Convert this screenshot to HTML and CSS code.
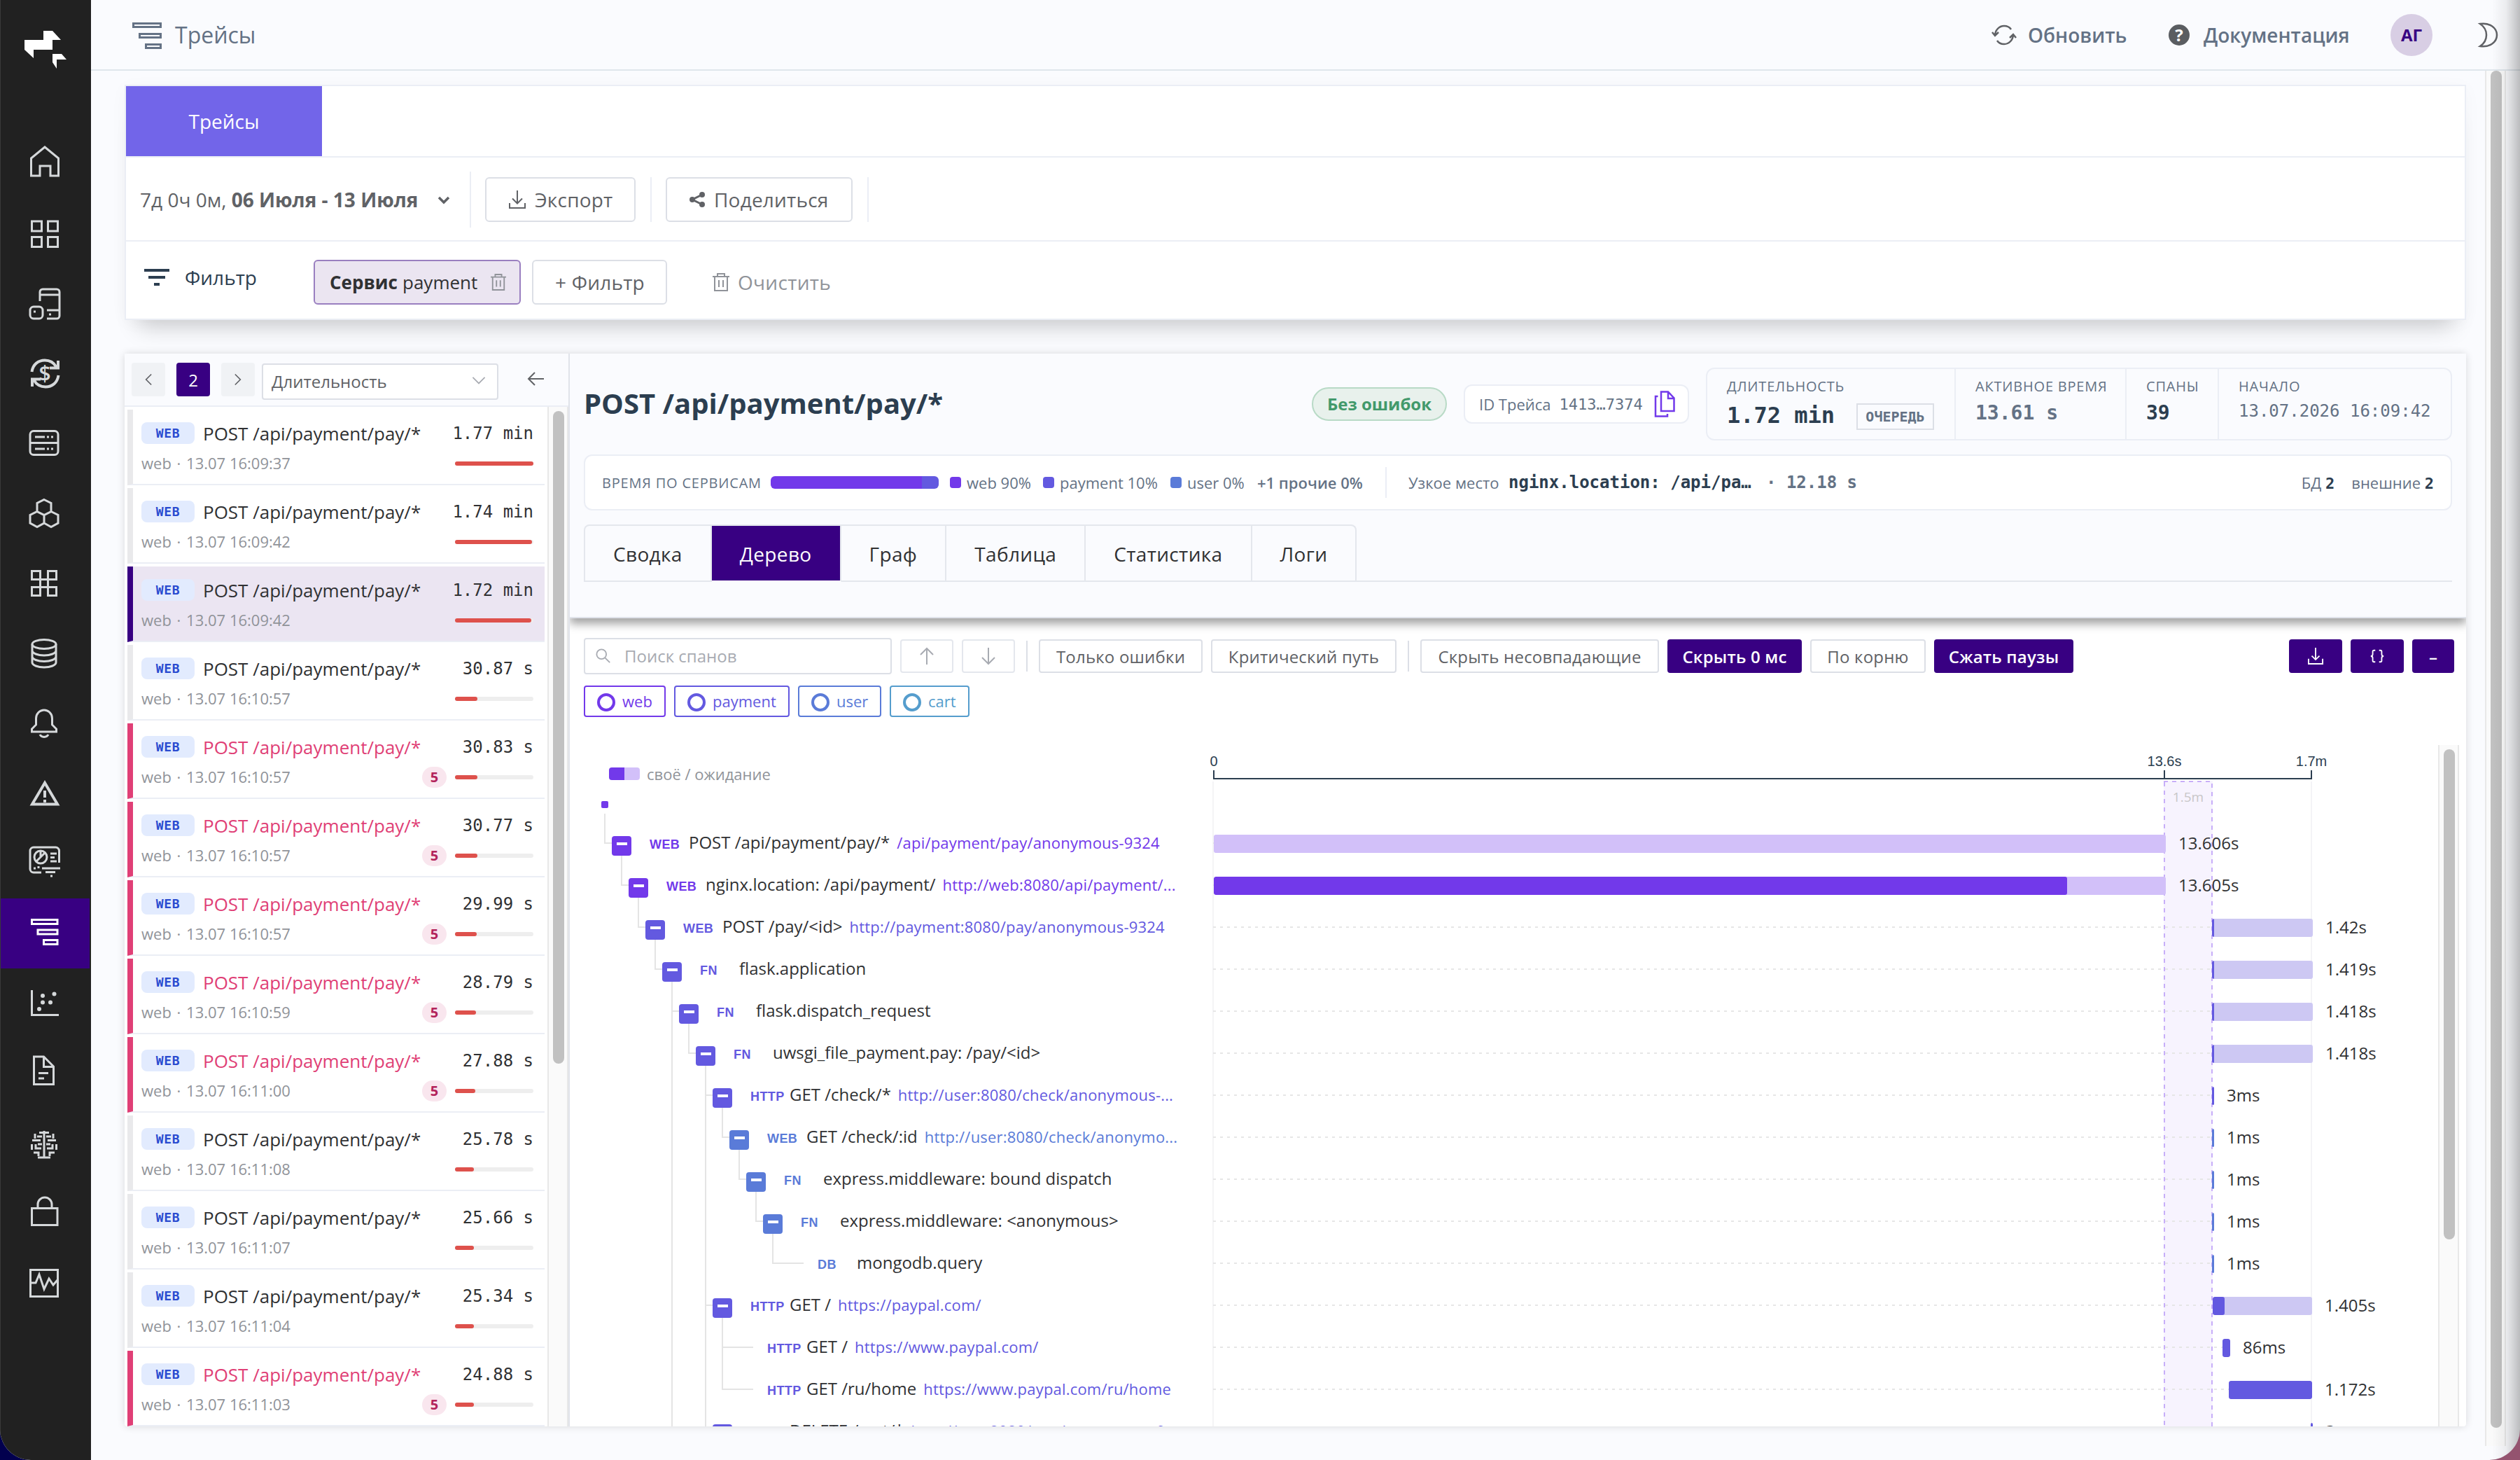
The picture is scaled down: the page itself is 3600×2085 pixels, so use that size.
FILE: index.html
```html
<!DOCTYPE html>
<html lang="ru">
<head>
    <meta charset="UTF-8">
    <meta name="viewport" content="width=device-width, initial-scale=1.0">
    <title>Трейсы</title>
    <link rel="stylesheet" href="styles.css">
</head>
<body>

<div class="app">
    <nav class="sidebar">
        <svg class="logo" viewBox="0 0 60 54"><path d="M27 0h13l12 13v0H40v14H23l0 0H13v12L0 27V13h27z"/><path d="M40 33h13l7 8H49l-3 0v13l-6-9z"/></svg>
        <a class="nav-item"><svg viewBox="0 0 48 48"><path d="M24 1 4.500 17v25H17V28h15v14h11.500V17z"/></svg></a>
        <a class="nav-item"><svg viewBox="0 0 48 48"><path d="M5.500 7h14v14h-14zM28.500 7h14v14h-14zM5.500 29.500h14v14h-14zM28.500 29.500h14v14h-14z"/></svg></a>
        <a class="nav-item"><svg viewBox="0 0 48 48"><path d="M17 21V8a4 4 0 0 1 4-4h20a4 4 0 0 1 4 4v34a4 4 0 0 1-4 4H27M17 12h28M27 34h18M30 40h3M8 36h3"/><rect x="3" y="29" width="18" height="17" rx="5"/></svg></a>
        <a class="nav-item"><svg viewBox="0 0 48 48"><path class="thick" d="M5.500 22C7 11 15 5.500 24 5.500c7 0 13 3.500 16.500 9.500M43 6v10.500H31M43.500 27C42 38 34 43.500 25 43.500c-7 0-13-3.500-16.500-9.500M6 43V32.500h12"/><text x="24" y="35" text-anchor="middle">$</text></svg></a>
        <a class="nav-item"><svg viewBox="0 0 48 48"><rect x="3" y="6.500" width="40" height="34" rx="5"/><path d="M3 23.500h40M10 15h14M27 15h3M33 15h3M10 32h14M27 32h3M33 32h3"/></svg></a>
        <a class="nav-item"><svg viewBox="0 0 48 48"><path d="M23 4.500 33 9.500v12L23 26.500 13 21.500v-12zM13 21.500l10 5v11.500l-10 5.500-10-5.500V26.500zM33 21.500l10 5v11.500l-10 5.500-10-5.500"/></svg></a>
        <a class="nav-item"><svg viewBox="0 0 48 48"><path d="M5.500 6.500h12v35h-12v-12h35v12h-12v-35h12v12h-35z"/></svg></a>
        <a class="nav-item"><svg viewBox="0 0 48 48"><ellipse cx="23" cy="11" rx="17" ry="6.500"/><path d="M6 11v26c0 4 8 7 17 7s17-3 17-7V11M6 20c0 4 8 7 17 7s17-3 17-7M6 28.500c0 4 8 7 17 7s17-3 17-7"/></svg></a>
        <a class="nav-item"><svg viewBox="0 0 48 48"><path d="M5.500 36v-4l6-6V17a11.500 12 0 0 1 23 0v9l6 6v4zM17 40c2 4.500 10 4.500 12 0"/></svg></a>
        <a class="nav-item"><svg viewBox="0 0 48 48"><path class="thick" d="M24 9 6 39.500h36zM24 20v10M24 33v4"/></svg></a>
        <a class="nav-item"><svg viewBox="0 0 48 48"><path d="M44.500 23V6a5 5 0 0 0-5-5H8a5 5 0 0 0-5 5v26a5 5 0 0 0 5 5h11M20 31h26M25 36.500h14M32 42h3M32 10h9M32 15.500h6M32 21h9M15 28v3M8 31h3"/><circle cx="18" cy="15" r="9"/><path d="M18 6v9l-6 6M18 15l6-6"/></svg></a>
        <a class="nav-item active"><svg viewBox="0 0 48 48"><path d="M5.500 4.500h36.500v6H5.500zM14 19h28v6H14zM22.500 33.500H42v6H22.500z"/></svg></a>
        <a class="nav-item"><svg viewBox="0 0 48 48"><path d="M5.500 5v35.500H44"/><g class="dots"><circle cx="16" cy="32" r="3"/><circle cx="21" cy="22.500" r="3"/><circle cx="21" cy="13" r="3"/><circle cx="32" cy="22.500" r="3"/><circle cx="37.500" cy="10.500" r="3"/></g></svg></a>
        <a class="nav-item"><svg viewBox="0 0 48 48"><path d="M8.500 0h14l14 14v25.500h-28zM22.500 0v14.500h14M15 23.500h14M15 31h8"/></svg></a>
        <a class="nav-item"><svg viewBox="0 0 48 48"><path d="M23 6v38M16 8.500h14M10 10v7M36 10v7M13 14h7M26 14h7M6 19.500h12M28 19.500h12M5.500 25v8M40.500 25v8M11 25v6h8M35 25v6h-8M14 25h6M26 25h6M8 37h7v5M38 37h-7v5M14 44h18"/></svg></a>
        <a class="nav-item"><svg viewBox="0 0 48 48"><path d="M5.500 16.500H42v24H5.500zM14 16V11a10 10 0 0 1 20 0v5"/></svg></a>
        <a class="nav-item"><svg viewBox="0 0 48 48"><path d="M3.500 4.500h39v38h-39zM4 23h7l5-12 7 21 7-15 6 9 6-7"/></svg></a>
    </nav>

    <div class="page">
        <header class="topbar">
            <svg class="topbar-icon" viewBox="0 0 42 40"><path d="M1.500 2.500h39v5h-39zM10.500 17.500h30v5h-30zM19.500 32.500h21v5h-21z"/></svg>
            <h1>Трейсы</h1>
            <div class="topbar-links">
                <svg class="i-refresh" viewBox="0 0 36 30"><path d="M5 16C5 8 11 2 18 2c4 0 8 2 10 5M1 11l4 5 5-5M31 14c0 8-6 14-13 14-4 0-8-2-10-5M26 19l5-5 4 5"/></svg>
                <span class="t-refresh">Обновить</span>
                <span class="help">?</span>
                <span class="t-docs">Документация</span>
                <span class="avatar">АГ</span>
                <svg class="i-moon" viewBox="0 0 28 36"><path d="M2 2c14-2 24 6 24 16S16 36 2 34c12-8 12-24 0-32z"/></svg>
            </div>
        </header>

        <div class="content">
            <main class="main">
                <section class="filters">
                    <div class="page-tabs"><div class="page-tab">Трейсы</div></div>
                    <div class="range-row">
                        <div class="range"><span>7д 0ч 0м, <b>06 Июля - 13 Июля</b></span>
                            <svg viewBox="0 0 18 12"><path d="M2 2l7 7 7-7"/></svg>
                        </div>
                        <div class="btn btn-export">
                            <svg viewBox="0 0 24 26"><path d="M12 0v18M5 11.500l7 7 7-7M1 18v7h22v-7"/></svg>Экспорт
                        </div>
                        <i class="vline"></i>
                        <div class="btn btn-share">
                            <svg viewBox="0 0 22 22"><path d="M18 4 4 11l14 7"/><circle cx="18" cy="4" r="3"/><circle cx="4" cy="11" r="3"/><circle cx="18" cy="18" r="3"/></svg>Поделиться
                        </div>
                        <i class="vline"></i>
                    </div>
                    <div class="filter-row">
                        <div class="filter-title"><svg viewBox="0 0 36 24"><path d="M0 2h36M6 12h24M14 22h8"/></svg>Фильтр</div>
                        <div class="tag"><b>Сервис</b><span>payment</span>
                            <svg class="trash" viewBox="0 0 24 26"><path d="M0 5h24M7 5V1h10v4M3 5v20h18V5M9 10v10M15 10v10"/></svg>
                        </div>
                        <div class="btn btn-add">+ Фильтр</div>
                        <div class="clear"><svg class="trash" viewBox="0 0 24 26"><path d="M0 5h24M7 5V1h10v4M3 5v20h18V5M9 10v10M15 10v10"/></svg>Очистить</div>
                    </div>
                </section>

                <section class="explorer">
                    <aside class="trace-pane">
                        <div class="pager">
                            <span class="page-btn"><svg viewBox="0 0 12 20"><path d="M11 1 2 10l9 9"/></svg></span>
                            <span class="page-btn current">2</span>
                            <span class="page-btn"><svg viewBox="0 0 12 20"><path d="M1 1l9 9-9 9"/></svg></span>
                            <div class="select">Длительность<svg viewBox="0 0 22 14"><path d="M1 1l10 10L21 1"/></svg></div>
                            <svg class="collapse" viewBox="0 0 24 20"><path d="M24 10H2M11 1 2 10l9 9"/></svg>
                        </div>
                        <div class="trace-body">
                            <div class="trace-list" id="traces"></div>
                            <div class="scrollbar"><div class="thumb"></div></div>
                        </div>
                    </aside>

                    <div class="trace-view">
                        <div class="trace-head">
                            <div class="summary">
                                <h2>POST /api/payment/pay/*</h2>
                                <span class="ok-badge">Без ошибок</span>
                                <div class="trace-id"><span>ID Трейса</span><code>1413…7374</code>
                                    <svg viewBox="0 0 30 38"><path d="M10 1.500h10l8.500 9V29H10zM20 2v9h8M5.500 8H2v28.500h17V33"/></svg>
                                </div>
                                <div class="metrics">
                                    <div class="metric m-duration"><label>Длительность</label><div><strong>1.72 min</strong><em>ОЧЕРЕДЬ</em></div></div>
                                    <div class="metric m-active"><label>Активное время</label><strong>13.61 s</strong></div>
                                    <div class="metric m-spans"><label>Спаны</label><strong>39</strong></div>
                                    <div class="metric m-start"><label>Начало</label><code>13.07.2026 16:09:42</code></div>
                                </div>
                            </div>
                            <div class="services">
                                <span class="caption">Время по сервисам</span>
                                <div class="share-bar"><i class="s-web"></i><i class="s-payment"></i></div>
                                <span class="key k-web">web 90%</span>
                                <span class="key k-payment">payment 10%</span>
                                <span class="key k-user">user 0%</span>
                                <b class="others">+1 прочие 0%</b>
                                <span class="bottleneck">Узкое место</span>
                                <code class="where">nginx.location: /api/pa…</code>
                                <code class="cost">· 12.18 s</code>
                                <span class="calls">БД <b>2</b></span>
                                <span class="calls external">внешние <b>2</b></span>
                            </div>
                            <div class="tabs">
                                <span class="tab">Сводка</span>
                                <span class="tab active">Дерево</span>
                                <span class="tab">Граф</span>
                                <span class="tab">Таблица</span>
                                <span class="tab">Статистика</span>
                                <span class="tab">Логи</span>
                            </div>
                        </div>

                        <div class="toolbar">
                            <div class="search"><svg viewBox="0 0 24 24"><circle cx="9" cy="9" r="7.500"/><path d="M14.500 14.500 22 22"/></svg>Поиск спанов</div>
                            <span class="tool arrow"><svg viewBox="0 0 20 24"><path d="M10 24V1M1 10l9-9 9 9"/></svg></span>
                            <span class="tool arrow"><svg viewBox="0 0 20 24"><path d="M10 0v23M1 14l9 9 9-9"/></svg></span>
                            <i class="vline"></i>
                            <span class="tool" style="width: 234px">Только ошибки</span>
                            <span class="tool" style="width: 265px">Критический путь</span>
                            <i class="vline"></i>
                            <span class="tool" style="width: 341px">Скрыть несовпадающие</span>
                            <span class="tool on" style="width: 192px">Скрыть 0 мс</span>
                            <span class="tool" style="width: 165px">По корню</span>
                            <span class="tool on" style="width: 199px">Сжать паузы</span>
                            <span class="tool on first-right" style="width: 76px"><svg viewBox="0 0 24 26"><path d="M12 0v18M6 12.500l6 6 6-6M1 17v8h22v-8"/></svg></span>
                            <span class="tool on" style="width: 76px"><svg viewBox="0 0 24 20"><path d="M9 1H7Q5 1 5 3v4q0 3-3 3 3 0 3 3v4q0 2 2 2h2M15 1h2q2 0 2 2v4q0 3 3 3-3 0-3 3v4q0 2-2 2h-2"/></svg></span>
                            <span class="tool on" style="width: 60px">–</span>
                        </div>
                        <div class="chips">
                            <span class="chip c-web" style="width: 117px">web</span>
                            <span class="chip c-payment" style="width: 165px">payment</span>
                            <span class="chip c-user" style="width: 119px">user</span>
                            <span class="chip c-cart" style="width: 114px">cart</span>
                        </div>

                        <div class="waterfall">
                            <div class="waterfall-body">
                                <div class="waterfall-head">
                                    <div class="legend"><i></i>своё / ожидание</div>
                                    <div class="axis">
                                        <span class="tick" style="left: 0">0</span>
                                        <span class="tick" style="left: 1358px">13.6s</span>
                                        <span class="tick" style="left: 1568px">1.7m</span>
                                    </div>
                                </div>
                                <div class="span-rows" id="spans"></div>
                                <div class="pause">1.5m</div>
                            </div>
                            <div class="scrollbar"><div class="thumb"></div></div>
                        </div>
                    </div>
                </section>
            </main>
            <div class="scrollbar page-scroll"><div class="thumb"></div></div>
        </div>
    </div>
    <div class="edge"></div>
</div>

<script src="script.js"></script>
</body>
</html>
```

FILE: styles.css
```css
*, *::before, *::after {
    box-sizing: border-box;
}
body {
    margin: 0;
    width: 3600px;
    height: 2085px;
    overflow: hidden;
    background: linear-gradient(90deg, #02004e 50%, #94536f 50%);
    font-family: "Open Sans", sans-serif;
    font-size: 28px;
    color: #606266;
}
h1, h2 {
    margin: 0;
}
code {
    font-family: "DejaVu Sans Mono", monospace;
}
svg {
    display: block;
    fill: none;
    stroke: currentColor;
    stroke-width: 2;
    overflow: visible;
    flex: none;
}
.app {
    display: flex;
    position: relative;
    height: 2085px;
    background: #fafbfe;
    border-radius: 0 0 44px 44px;
    overflow: hidden;
}

/* sidebar */
.sidebar {
    width: 130px;
    background: #212121;
    border-left: 1px solid #3a3a3a;
    color: #d5d8da;
    flex: none;
}
.logo {
    width: 60px;
    height: 54px;
    margin: 44px 0 85px 34px;
    fill: #fff;
    stroke: none;
}
.nav-item {
    display: flex;
    align-items: center;
    justify-content: center;
    width: 127px;
    height: 100px;
    padding-right: 2px;
}
.nav-item svg {
    width: 48px;
    height: 48px;
    stroke-width: 3;
}
.nav-item .thick {
    stroke-width: 4;
}
.nav-item text {
    font-size: 30px;
    font-weight: 600;
    fill: currentColor;
    stroke: none;
}
.nav-item .dots {
    fill: currentColor;
    stroke: none;
}
.nav-item.active {
    background: #380082;
    color: #fff;
}

/* top bar */
.page {
    flex: 1;
    display: flex;
    flex-direction: column;
    min-width: 0;
}
.topbar {
    display: flex;
    align-items: center;
    height: 101px;
    padding-left: 59px;
    border-bottom: 2px solid #dfe6ec;
    color: #647285;
}
.topbar-icon {
    width: 42px;
    height: 40px;
    stroke-width: 3;
    margin: 2px 19px 0 0;
}
.topbar h1 {
    font-size: 32px;
    font-weight: 400;
}
.topbar-links {
    display: flex;
    align-items: center;
    margin-left: auto;
    padding-right: 31px;
    font-weight: 600;
}
.i-refresh {
    width: 36px;
    height: 30px;
    color: #606266;
    stroke-width: 2.5;
    margin-right: 16px;
}
.t-refresh {
    width: 201px;
}
.help {
    width: 30px;
    height: 30px;
    line-height: 30px;
    border-radius: 50%;
    background: #5a5d61;
    color: #fff;
    font-size: 24px;
    font-weight: 700;
    text-align: center;
    margin-right: 20px;
}
.t-docs {
    width: 267px;
}
.avatar {
    width: 60px;
    height: 60px;
    line-height: 60px;
    border-radius: 50%;
    background: #d8cee4;
    color: #380082;
    font-size: 24px;
    font-weight: 700;
    text-align: center;
    margin-right: 66px;
}
.i-moon {
    width: 28px;
    height: 36px;
    color: #606266;
    stroke-width: 2.5;
}

.content {
    display: flex;
    flex: 1;
}
.main {
    width: 3393px;
    margin: 20px 0 0 48px;
}

/* filters */
.filters {
    width: 3345px;
    height: 336px;
    background: #fff;
    border: 2px solid #ebeef5;
    box-shadow: 0 30px 30px -20px rgba(0, 0, 0, 0.18), 0 4px 24px rgba(0, 0, 0, 0.03);
}
.page-tabs {
    height: 102px;
    border-bottom: 2px solid #ebeef5;
}
.page-tab {
    width: 280px;
    height: 100px;
    line-height: 100px;
    background: #7265e9;
    color: #fff;
    text-align: center;
    font-weight: 500;
}
.range-row {
    display: flex;
    align-items: center;
    height: 120px;
    padding-top: 2px;
    border-bottom: 2px solid #ebeef5;
}
.range {
    display: flex;
    align-items: center;
    width: 493px;
    height: 80px;
    padding-left: 20px;
    border-right: 2px solid #ebeef5;
}
.range svg {
    width: 18px;
    height: 12px;
    stroke-width: 3.500;
    margin: 2px 0 0 28px;
}
.btn {
    display: flex;
    align-items: center;
    height: 64px;
    border: 2px solid #dcdfe6;
    border-radius: 6px;
    background: #fff;
    font-weight: 500;
    letter-spacing: 0.2px;
    white-space: nowrap;
}
.btn-export {
    width: 215px;
    margin: 0 21px 0 20px;
    padding-left: 32px;
}
.btn-export svg {
    width: 24px;
    height: 26px;
    margin-right: 13px;
}
.btn-share {
    width: 267px;
    margin: 0 21px 0 20px;
    padding-left: 32px;
}
.btn-share svg {
    width: 22px;
    height: 22px;
    fill: currentColor;
    margin-right: 13px;
}
.btn-share path {
    fill: none;
    stroke-width: 3;
}
.vline {
    width: 2px;
    height: 64px;
    background: #ebeef5;
    flex: none;
}
.filter-row {
    display: flex;
    height: 110px;
    padding: 26px 0 0 26px;
}
.filter-title {
    display: flex;
    align-items: center;
    width: 242px;
    height: 50px;
    color: #2c3e50;
    font-weight: 500;
}
.filter-title svg {
    width: 36px;
    height: 24px;
    stroke-width: 4;
    margin-right: 22px;
}
.tag {
    display: flex;
    align-items: center;
    width: 296px;
    height: 64px;
    padding-left: 21px;
    border: 2px solid #9a7fc0;
    border-radius: 6px;
    background: #ebe5f1;
    color: #303133;
    font-size: 26px;
}
.tag b {
    width: 96px;
}
.tag span {
    width: 126px;
    margin-left: 8px;
}
.trash {
    width: 24px;
    height: 26px;
    color: #909399;
}
.tag .trash {
    width: 22px;
    height: 24px;
}
.btn-add {
    width: 193px;
    margin-left: 16px;
    padding-left: 31px;
}
.clear {
    display: flex;
    align-items: center;
    height: 64px;
    margin-left: 65px;
    color: #909399;
    font-weight: 500;
    letter-spacing: 0.3px;
}
.clear .trash {
    margin-right: 12px;
}

/* explorer */
.explorer {
    display: flex;
    width: 3345px;
    height: 1532px;
    margin-top: 48px;
    border-radius: 4px;
    background: #fff;
    box-shadow: 0 0 12px rgba(0, 0, 0, 0.14);
    overflow: clip;
    overflow-clip-margin: 20px;
}
.trace-pane {
    width: 636px;
    border-right: 2px solid #e0e3ea;
    flex: none;
}
.pager {
    display: flex;
    height: 76px;
    padding: 13px 0 0 10px;
    background: #fafbfe;
    border-bottom: 2px solid #ebeef5;
}
.page-btn {
    display: flex;
    align-items: center;
    justify-content: center;
    width: 48px;
    height: 48px;
    margin-right: 16px;
    padding-right: 1px;
    border-radius: 4px;
    background: #f0f2f5;
    font-size: 24px;
}
.page-btn svg {
    width: 10px;
    height: 18px;
}
.page-btn.current {
    padding: 0;
    background: #380082;
    color: #fff;
    font-weight: 500;
}
.select {
    display: flex;
    align-items: center;
    justify-content: space-between;
    width: 338px;
    height: 52px;
    margin: 1px 41px 0 -6px;
    padding: 0 16px 2px 12px;
    border: 2px solid #dcdfe6;
    border-radius: 4px;
    background: #fff;
    font-size: 24px;
}
.select svg {
    width: 20px;
    height: 12px;
    color: #a8abb2;
}
.collapse {
    width: 24px;
    height: 20px;
    margin-top: 13px;
}
.trace-body {
    display: flex;
    height: 1456px;
}
.trace-list {
    width: 600px;
    padding: 4px 0 0 4px;
    margin-right: 4px;
    overflow: hidden;
}
.trace {
    width: 596px;
    height: 108px;
    margin-bottom: 4px;
    padding: 12px 16px 0 12px;
    border-left: 8px solid #e9e9eb;
    border-bottom: 2px solid #ebeef5;
    color: #303133;
}
.trace.active {
    background: #ebe5f2;
    border-left-color: #380082;
}
.trace.failed {
    border-left-color: #e03f76;
}
.trace.failed .trace-name {
    color: #e03f76;
}
.trace-line {
    display: flex;
    align-items: center;
    height: 43px;
}
.kind {
    width: 76px;
    height: 31px;
    line-height: 31px;
    margin-right: 12px;
    border-radius: 8px;
    background: #e2ebfe;
    color: #2a4bd0;
    font-family: "DejaVu Sans Mono", monospace;
    font-size: 18px;
    font-weight: 700;
    letter-spacing: 0.6px;
    text-align: center;
}
.trace-name {
    font-size: 26px;
}
.trace-time {
    font-family: "DejaVu Sans Mono", monospace;
    font-size: 24px;
    margin-left: auto;
}
.trace-sub {
    height: 32px;
    font-size: 22px;
    color: #909399;
    margin-right: auto;
}
.trace-sub i {
    margin: 0 2px;
    font-style: normal;
}
.error-count {
    width: 35px;
    height: 30px;
    line-height: 30px;
    margin-right: 12px;
    border-radius: 15px;
    background: #f9e6ee;
    color: #b3245b;
    font-size: 20px;
    font-weight: 700;
    text-align: center;
}
.meter {
    width: 112px;
    height: 6px;
    border-radius: 3px;
    background: #eee;
}
.meter i {
    display: block;
    height: 6px;
    border-radius: 3px;
    background: #de514c;
}
.scrollbar {
    width: 30px;
    background: #fafafa;
    border: solid #e8e8e8;
    border-width: 0 2px;
    flex: none;
}
.thumb {
    width: 16px;
    margin: 6px 0 0 6px;
    border-radius: 8px;
    background: #c1c1c1;
}
.trace-body .thumb {
    height: 932px;
}

/* trace header */
.trace-view {
    flex: 1;
    display: flex;
    flex-direction: column;
    min-width: 0;
    overflow: hidden;
}
.trace-head {
    height: 378px;
    padding: 20px 20px 0;
    background: #fafbfe;
    border-bottom: 2px solid #e0e3ea;
    box-shadow: 0 8px 12px rgba(0, 0, 0, 0.36);
    flex: none;
}
.summary {
    display: flex;
    align-items: center;
    height: 104px;
}
.summary h2 {
    font-size: 40px;
    color: #2c3e50;
    margin: -3px auto 0 0;
}
.ok-badge {
    width: 193px;
    height: 48px;
    line-height: 44px;
    border: 2px solid #b8dac6;
    border-radius: 24px;
    background: #e8f1ec;
    color: #42996b;
    font-size: 24px;
    font-weight: 700;
    text-align: center;
}
.trace-id {
    display: flex;
    align-items: center;
    width: 322px;
    height: 56px;
    margin: 0 24px 0 24px;
    padding-left: 20px;
    border: 2px solid #ebeef5;
    border-radius: 12px;
    background: #fff;
    color: #647285;
    font-size: 22px;
}
.trace-id code {
    margin: 0 16px 0 12px;
}
.trace-id svg {
    width: 30px;
    height: 38px;
    color: #7239ea;
    stroke-width: 2.5;
}
.metrics {
    display: flex;
    height: 104px;
    width: 1066px;
    border: 2px solid #ebeef5;
    border-radius: 12px;
    color: #647285;
}
.metric {
    padding: 11px 0 0 28px;
    border-left: 2px solid #ebeef5;
}
.metric label {
    display: block;
    height: 31px;
    line-height: 28px;
    font-size: 20px;
    text-transform: uppercase;
    letter-spacing: 0.8px;
}
.metric strong {
    display: block;
    font: bold 28px/42px "DejaVu Sans Mono", monospace;
}
.metric code {
    display: block;
    font-size: 24px;
    line-height: 36px;
}
.metric div {
    display: flex;
    align-items: center;
    height: 48px;
}
.m-duration {
    width: 353px;
    border-left: none;
}
.m-duration strong {
    font-size: 32px;
    width: 185px;
    color: #2c3e50;
}
.m-duration em {
    width: 111px;
    height: 38px;
    margin-top: 4px;
    border: 2px solid #dcdfe6;
    font: bold 20px/34px "DejaVu Sans Mono", monospace;
    text-align: center;
}
.m-active {
    width: 244px;
}
.m-spans {
    width: 132px;
}
.m-spans strong {
    color: #2c3e50;
}
.services {
    display: flex;
    align-items: center;
    height: 80px;
    margin-top: 20px;
    padding: 0 24px;
    border: 2px solid #ebeef5;
    border-radius: 12px;
    background: #fff;
    color: #647285;
    font-size: 22px;
    white-space: nowrap;
}
.caption {
    width: 241px;
    font-size: 20px;
    text-transform: uppercase;
    letter-spacing: 0.8px;
}
.share-bar {
    display: flex;
    width: 240px;
    height: 18px;
    margin-right: 16px;
    border-radius: 6px;
    overflow: hidden;
}
.s-web {
    width: 90%;
    background: #7239ea;
}
.s-payment {
    width: 10%;
    background: #6359e0;
}
.key {
    display: flex;
    align-items: center;
}
.key::before {
    content: "";
    width: 16px;
    height: 16px;
    margin-right: 8px;
    border-radius: 4px;
}
.k-web {
    width: 133px;
}
.k-web::before {
    background: #7239ea;
}
.k-payment {
    width: 182px;
}
.k-payment::before {
    background: #6359e0;
}
.k-user {
    width: 124px;
}
.k-user::before {
    background: #5a7bd8;
}
.others {
    width: 185px;
    height: 44px;
    line-height: 44px;
    border-right: 2px solid #ebeef5;
    font-weight: 600;
}
.bottleneck {
    margin: 0 12px 0 31px;
    width: 131px;
}
.where {
    width: 368px;
    color: #2c3e50;
    font-size: 24px;
    font-weight: 700;
}
.cost {
    font-size: 24px;
    font-weight: 700;
    margin-right: auto;
}
.calls {
    margin-left: 24px;
}
.calls b {
    color: #2c3e50;
    font-family: "DejaVu Sans Mono", monospace;
}
.tabs {
    display: flex;
    height: 82px;
    margin-top: 20px;
    border-bottom: 2px solid #e4e7ed;
}
.tab {
    height: 80px;
    line-height: 80px;
    padding: 0 40px;
    border: solid #e4e7ed;
    border-width: 2px 2px 0 0;
    color: #303133;
    font-weight: 500;
    letter-spacing: 0.35px;
}
.tab:first-child {
    border-left-width: 2px;
    border-top-left-radius: 8px;
}
.tab:last-child {
    border-top-right-radius: 8px;
}
.tab.active {
    height: 82px;
    background: #380082;
    color: #fff;
    border-bottom: 2px solid #fff;
}

/* span toolbar */
.toolbar {
    display: flex;
    align-items: center;
    height: 52px;
    margin: 28px 17px 0 20px;
    font-size: 24px;
    flex: none;
}
.search {
    display: flex;
    align-items: center;
    width: 440px;
    height: 52px;
    padding: 0 0 1px 15px;
    border: 2px solid #dcdfe6;
    border-radius: 4px;
    color: #a8abb2;
}
.search svg {
    width: 22px;
    height: 22px;
    margin-right: 19px;
}
.tool {
    display: flex;
    align-items: center;
    justify-content: center;
    height: 48px;
    margin-left: 12px;
    border: 2px solid #dcdfe6;
    border-radius: 4px;
    font-weight: 500;
    letter-spacing: 0.2px;
    white-space: nowrap;
}
.tool.arrow {
    width: 76px;
    border-color: #e4e7ed;
    color: #a8abb2;
}
.tool.arrow svg {
    width: 20px;
    height: 24px;
}
.tool.on {
    background: #380082;
    border-color: #380082;
    color: #fff;
    font-weight: 600;
}
.tool.on svg {
    width: 22px;
    height: 24px;
}
.first-right {
    margin-left: auto;
}
.toolbar .vline {
    height: 44px;
    margin: 0 4px 0 16px;
    background: #dcdfe6;
}
.chips {
    display: flex;
    gap: 12px;
    height: 45px;
    margin: 16px 0 40px 20px;
    font-size: 22px;
    flex: none;
}
.chip {
    display: flex;
    align-items: center;
    border: 2px solid;
    border-radius: 4px;
    padding: 0 0 1px 17px;
}
.chip::before {
    content: "";
    width: 26px;
    height: 26px;
    margin: 4px 10px 0 0;
    border: 4px solid;
    border-radius: 50%;
}
.c-web {
    color: #7239ea;
}
.c-payment {
    color: #6359e0;
}
.c-user {
    color: #5a7bd8;
}
.c-cart {
    color: #559dcd;
}

/* waterfall */
.waterfall {
    display: flex;
    flex: 1;
    min-height: 0;
    padding-left: 20px;
}
.waterfall-body {
    position: relative;
    width: 2649px;
    overflow: hidden;
}
.waterfall .thumb {
    height: 700px;
}
.waterfall-head {
    display: flex;
    height: 80px;
}
.legend {
    display: flex;
    align-items: center;
    width: 899px;
    height: 82px;
    padding-left: 36px;
    font-size: 22px;
    color: #909399;
}
.legend i {
    width: 44px;
    height: 18px;
    margin-right: 10px;
    border-radius: 4px;
    background: linear-gradient(90deg, #7239ea 50%, #d2c0f9 50%);
}
.axis {
    position: relative;
    width: 1570px;
    height: 49px;
    border-bottom: 2px solid #2c3e50;
}
.tick {
    position: absolute;
    bottom: 0;
    width: 2px;
    height: 36px;
    display: flex;
    justify-content: center;
    color: #2c3e50;
    font: 20px/24px "Liberation Sans", Arial, sans-serif;
}
.tick::after {
    content: "";
    position: absolute;
    bottom: 0;
    width: 2px;
    height: 11px;
    background: #2c3e50;
}
.span-rows {
    position: relative;
    padding-top: 30px;
}
.span-rows::before,
.span-rows::after {
    content: "";
    position: absolute;
    top: -28px;
    left: 898px;
    width: 2px;
    height: 1000px;
    background: #f4f4f6;
}
.span-rows::after {
    left: 2467px;
}
.root-dot {
    position: absolute;
    top: 0;
    left: 25px;
    width: 10px;
    height: 10px;
    border-radius: 2px;
    background: #7239ea;
}
.span-row {
    position: relative;
    z-index: 1;
    display: flex;
    height: 60px;
}
.span-cell {
    display: flex;
    align-items: baseline;
    width: 899px;
    line-height: 58px;
    white-space: nowrap;
}
.elbow {
    position: absolute;
    bottom: 29px;
    border: solid #e4e4e4;
    border-width: 0 0 2px 2px;
}
.trunk {
    position: absolute;
    top: 48px;
    width: 2px;
    height: 900px;
    background: #e4e4e4;
}
.toggle {
    align-self: flex-start;
    width: 28px;
    height: 28px;
    margin-top: 20px;
    border-radius: 4px;
    background: currentColor;
    flex: none;
}
.toggle::before {
    content: "";
    display: block;
    width: 15px;
    height: 4px;
    margin: 9px 0 0 7px;
    background: #fff;
}
.toggle.leaf {
    visibility: hidden;
}
.span-kind {
    width: 56px;
    margin-left: 26px;
    font: bold 18px "Liberation Sans", Arial, sans-serif;
    letter-spacing: 0.4px;
    flex: none;
}
.span-name {
    font-size: 24px;
    color: #303133;
    margin-right: 10px;
}
.span-url {
    font-size: 22px;
    font-weight: 500;
    letter-spacing: 0.2px;
}
.span-time {
    display: flex;
    align-items: center;
    font-size: 24px;
    font-weight: 500;
    color: #303133;
}
.guide {
    height: 2px;
    background: repeating-linear-gradient(90deg, #e6e6e6 0 4px, transparent 4px 10px);
}
.bar {
    height: 26px;
    margin-top: 2px;
    border-radius: 3px;
    overflow: hidden;
}
.bar i {
    display: block;
    height: 26px;
    border-radius: 3px;
}
.span-duration {
    margin: -2px 0 0 18px;
}
.web {
    color: #7239ea;
}
.web .bar {
    background: #d2c0f9;
}
.web .bar i {
    background: #7239ea;
}
.payment {
    color: #6359e0;
}
.payment .bar {
    background: #cdc8f3;
}
.payment .bar i {
    background: #6359e0;
}
.user {
    color: #5a7bd8;
}
.user .bar {
    background: #c8d3f3;
}
.user .bar i {
    background: #5a7bd8;
}
.pause {
    position: absolute;
    top: 51px;
    left: 2257px;
    width: 70px;
    height: 940px;
    padding-top: 10px;
    background:
        repeating-linear-gradient(90deg, #c7aef8 0 6px, transparent 6px 12px) 0 0 / 100% 2px no-repeat,
        repeating-linear-gradient(#c7aef8 0 6px, transparent 6px 12px) 0 2px / 2px 100% no-repeat,
        repeating-linear-gradient(#c7aef8 0 6px, transparent 6px 12px) 100% 4px / 2px 100% no-repeat,
        rgba(114, 57, 234, 0.06);
    color: #c8c6c8;
    font-size: 19px;
    font-weight: 500;
    text-align: center;
}

.page-scroll {
    margin-right: 20px;
    margin-left: auto;
    height: 1964px;
}
.page-scroll .thumb {
    height: 1938px;
    margin-top: 0;
}
.edge {
    position: absolute;
    top: 0;
    right: 0;
    width: 40px;
    height: 2085px;
    background: linear-gradient(90deg, rgba(0, 0, 0, 0), rgba(0, 0, 0, 0.06) 50%, rgba(0, 0, 0, 0.25));
}
```

FILE: script.js
```js
const traces = [
    { time: '1.77 min', at: '16:09:37', fill: 100 },
    { time: '1.74 min', at: '16:09:42', fill: 98 },
    { time: '1.72 min', at: '16:09:42', fill: 97, active: true },
    { time: '30.87 s', at: '16:10:57', fill: 29 },
    { time: '30.83 s', at: '16:10:57', fill: 29, errors: 5 },
    { time: '30.77 s', at: '16:10:57', fill: 29, errors: 5 },
    { time: '29.99 s', at: '16:10:57', fill: 28, errors: 5 },
    { time: '28.79 s', at: '16:10:59', fill: 27, errors: 5 },
    { time: '27.88 s', at: '16:11:00', fill: 26, errors: 5 },
    { time: '25.78 s', at: '16:11:08', fill: 24 },
    { time: '25.66 s', at: '16:11:07', fill: 24 },
    { time: '25.34 s', at: '16:11:04', fill: 24 },
    { time: '24.88 s', at: '16:11:03', fill: 24, errors: 5 }
];

// bar: [start, width, own time] in pixels of the compressed scale
const spans = [
    { depth: 0, service: 'web', kind: 'WEB', name: 'POST /api/payment/pay/*', url: '/api/payment/pay/anonymous-9324', bar: [1, 1360, 0], time: '13.606s', up: 1 },
    { depth: 1, service: 'web', kind: 'WEB', name: 'nginx.location: /api/payment/', url: 'http://web:8080/api/payment/...', bar: [1, 1360, 1219], time: '13.605s', up: 1 },
    { depth: 2, service: 'payment', kind: 'WEB', name: 'POST /pay/<id>', url: 'http://payment:8080/pay/anonymous-9324', bar: [1427, 144, 3], time: '1.42s', up: 1 },
    { depth: 3, service: 'payment', kind: 'FN', name: 'flask.application', bar: [1427, 144, 3], time: '1.419s', up: 1, trunk: true },
    { depth: 4, service: 'payment', kind: 'FN', name: 'flask.dispatch_request', bar: [1427, 144, 3], time: '1.418s', up: 1 },
    { depth: 5, service: 'payment', kind: 'FN', name: 'uwsgi_file_payment.pay: /pay/<id>', bar: [1427, 144, 3], time: '1.418s', up: 1, trunk: true },
    { depth: 6, service: 'payment', kind: 'HTTP', name: 'GET /check/*', url: 'http://user:8080/check/anonymous-...', bar: [1427, 3, 3], time: '3ms', up: 1 },
    { depth: 7, service: 'user', kind: 'WEB', name: 'GET /check/:id', url: 'http://user:8080/check/anonymo...', bar: [1427, 3, 3], time: '1ms', up: 1 },
    { depth: 8, service: 'user', kind: 'FN', name: 'express.middleware: bound dispatch', bar: [1427, 3, 3], time: '1ms', up: 1 },
    { depth: 9, service: 'user', kind: 'FN', name: 'express.middleware: <anonymous>', bar: [1427, 3, 3], time: '1ms', up: 1 },
    { depth: 10, service: 'user', kind: 'DB', name: 'mongodb.query', bar: [1427, 3, 3], time: '1ms', up: 1, leaf: true },
    { depth: 6, service: 'payment', kind: 'HTTP', name: 'GET /', url: 'https://paypal.com/', bar: [1428, 142, 17], time: '1.405s', up: 1 },
    { depth: 7, service: 'payment', kind: 'HTTP', name: 'GET /', url: 'https://www.paypal.com/', bar: [1442, 11, 11], time: '86ms', up: 1, leaf: true },
    { depth: 7, service: 'payment', kind: 'HTTP', name: 'GET /ru/home', url: 'https://www.paypal.com/ru/home', bar: [1451, 119, 119], time: '1.172s', up: 2, leaf: true },
    { depth: 6, service: 'payment', kind: 'HTTP', name: 'DELETE /cart/*', url: 'http://cart:8080/cart/anonymous-9...', bar: [1568, 3, 3], time: '3ms', up: 1 }
];

function escapeHtml(text) {
    return text.replace(/</g, '&lt;').replace(/>/g, '&gt;');
}

function renderTrace(t) {
    const state = (t.active ? ' active' : '') + (t.errors ? ' failed' : '');
    return `<div class="trace${state}">
        <div class="trace-line"><span class="kind">WEB</span><span class="trace-name">POST /api/payment/pay/*</span><span class="trace-time">${t.time}</span></div>
        <div class="trace-line"><span class="trace-sub">web <i>·</i> 13.07 ${t.at}</span>${t.errors ? `<span class="error-count">${t.errors}</span>` : ''}<div class="meter"><i style="width: ${t.fill}%"></i></div></div>
    </div>`;
}

function renderSpan(s) {
    const x = 40 + s.depth * 24;
    const [start, width, own] = s.bar;
    const height = s.up * 60 - 17;
    return `<div class="span-row ${s.service}">
        <i class="elbow" style="left: ${x - 11}px; width: ${s.leaf ? 45 : 11}px; height: ${height}px"></i>
        ${s.trunk ? `<i class="trunk" style="left: ${x + 13}px"></i>` : ''}
        <div class="span-cell" style="padding-left: ${x}px">
            <i class="toggle${s.leaf ? ' leaf' : ''}"></i>
            <span class="span-kind">${s.kind}</span>
            <span class="span-name">${escapeHtml(s.name)}</span>
            <span class="span-url">${s.url || ''}</span>
        </div>
        <div class="span-time">
            <div class="guide" style="width: ${start}px"></div>
            <div class="bar" style="width: ${width}px"><i style="width: ${own}px"></i></div>
            <span class="span-duration">${s.time}</span>
        </div>
    </div>`;
}

document.getElementById('traces').innerHTML = traces.map(renderTrace).join('');
document.getElementById('spans').innerHTML = '<i class="root-dot"></i>' + spans.map(renderSpan).join('');
```
